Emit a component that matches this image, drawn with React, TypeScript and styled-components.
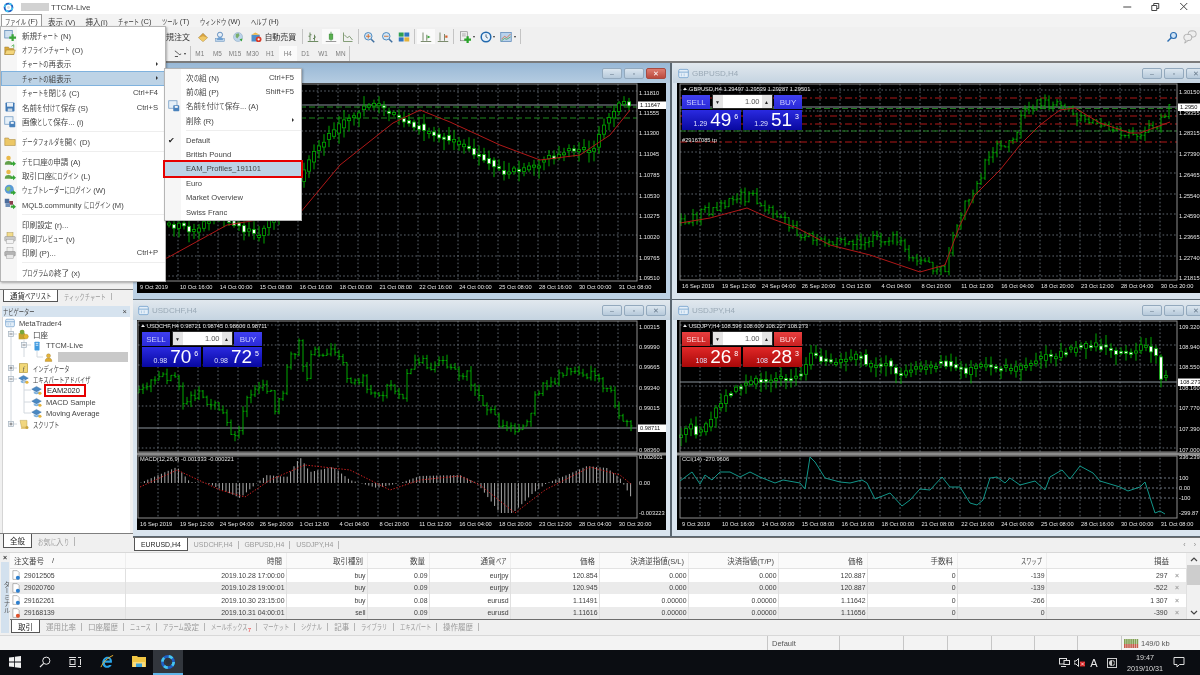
import React from "react";
import styled, { createGlobalStyle } from "styled-components";

const UI_FONT = `"Liberation Sans", "Noto Sans CJK JP", sans-serif`;

const GlobalStyle = createGlobalStyle`
  html, body {
    margin: 0;
    padding: 0;
    background: #f0f0f0;
    overflow: hidden;
  }
  body {
    font-family: ${UI_FONT};
    font-size: 7.5px;
    color: #3a3a3a;
  }
`;

type Pt = [number, number];

// the original UI font squeezes kana sideways, kanji stay full width
const KANA_SCALE = 0.7;

const KanaRun = styled.span<{ $count: number }>`
  display: inline-block;
  width: ${(p) => p.$count * KANA_SCALE}em;
  white-space: nowrap;
`;

const KanaInner = styled.span`
  display: inline-block;
  transform: scaleX(${KANA_SCALE});
  transform-origin: 0 50%;
`;

const Jp: React.FC<{ text: string }> = ({ text }) => (
  <>
    {text.split(/([\u3040-\u30ff]+)/).map((part, i) =>
      i % 2 ? (
        <KanaRun key={i} $count={part.length}>
          <KanaInner>{part}</KanaInner>
        </KanaRun>
      ) : (
        part
      )
    )}
  </>
);

/* ---------- small drawings ---------- */

const glyphs: Record<string, React.ReactNode> = {
  newchart: (
    <>
      <rect x="1" y="2" width="10" height="10" fill="#cfe0f0" stroke="#5b87b5" />
      <path d="M10 7h3v3h3v3h-3v3h-3v-3H7v-3h3z" fill="#3aa53a" />
    </>
  ),
  folderopen: (
    <>
      <path d="M1 4h5l1 2h6v8H1z" fill="#d9a93a" stroke="#96742a" strokeWidth=".6" />
      <path d="M3 8h12l-2 6H1z" fill="#f4d67c" stroke="#96742a" strokeWidth=".6" />
      <path d="M10 3l3-2v4" stroke="#3aa53a" fill="none" />
    </>
  ),
  save: (
    <>
      <rect x="2" y="2" width="12" height="12" rx="1" fill="#3f78b5" />
      <rect x="4" y="2.5" width="8" height="5" fill="#e8f0f8" />
      <rect x="5" y="10" width="6" height="4" fill="#c6d6e6" />
    </>
  ),
  saveimage: (
    <>
      <rect x="1" y="1" width="11" height="10" fill="#e6f0f8" stroke="#6d98c2" />
      <rect x="7" y="7" width="8" height="8" rx="1" fill="#4a82bc" />
      <rect x="9" y="8" width="4" height="2.5" fill="#eef4fa" />
    </>
  ),
  folder: <path d="M1 4h5l1 2h8v8H1z" fill="#ecc766" stroke="#a5843a" strokeWidth=".7" />,
  userarrow: (
    <>
      <circle cx="6" cy="4" r="3" fill="#e9b949" />
      <path d="M1 13c0-4 2-5 5-5s5 1 5 5z" fill="#62a04a" />
      <path d="M9 10h3V8l4 3.5-4 3.5v-2H9z" fill="#35a535" />
    </>
  ),
  globearrow: (
    <>
      <circle cx="7" cy="7" r="6" fill="#5a9bd6" />
      <path d="M3 5l4-2 2 3-3 4-3-2z" fill="#8fc26a" />
      <path d="M9 10h3V8l4 3.5-4 3.5v-2H9z" fill="#35a535" />
    </>
  ),
  mqlarrow: (
    <>
      <rect x="1" y="1" width="6" height="6" fill="#4c6d9c" />
      <rect x="7" y="4" width="5" height="5" fill="#8b3f4c" />
      <rect x="2" y="7" width="6" height="5" fill="#6f8fb8" />
      <path d="M9 10h3V8l4 3.5-4 3.5v-2H9z" fill="#35a535" />
    </>
  ),
  preview: (
    <>
      <rect x="4" y="1" width="8" height="6" fill="#f3dc8c" stroke="#a58d3c" strokeWidth=".6" />
      <rect x="1" y="6" width="14" height="6" rx="1" fill="#c9c9c9" stroke="#888" strokeWidth=".6" />
      <rect x="3" y="10" width="10" height="5" fill="#f2f2f2" stroke="#999" strokeWidth=".6" />
    </>
  ),
  print: (
    <>
      <rect x="4" y="1" width="8" height="6" fill="#f0f0f0" stroke="#999" strokeWidth=".6" />
      <rect x="1" y="6" width="14" height="6" rx="1" fill="#b4b4b4" stroke="#808080" strokeWidth=".6" />
      <rect x="3" y="10" width="10" height="5" fill="#e8e8e8" stroke="#999" strokeWidth=".6" />
    </>
  ),
  gold: (
    <>
      <path d="M2 9l6-6 6 6-6 5z" fill="#d9a441" stroke="#8a6a24" strokeWidth=".6" />
      <path d="M2 9l6 5 6-5-6-2z" fill="#f0c865" />
    </>
  ),
  person: (
    <>
      <rect x="2" y="10" width="12" height="4" fill="#bcd3ea" stroke="#5b87b5" strokeWidth=".6" />
      <circle cx="8" cy="5" r="3.4" fill="#e5eef7" stroke="#3d74b0" />
      <path d="M4 12c0-3 2-4 4-4s4 1 4 4z" fill="#6ea0d2" />
    </>
  ),
  globe: (
    <>
      <circle cx="8" cy="8" r="6" fill="#bcd4ea" stroke="#7d9cbc" strokeWidth=".6" />
      <path d="M5 4l4-1 1 3-3 4-2-2z" fill="#79ad6b" />
      <path d="M10 11l4-1-1 4z" fill="#3aa53a" />
    </>
  ),
  auto: (
    <>
      <rect x="2" y="5" width="11" height="9" fill="#4f8fca" />
      <path d="M2 5l5-3 6 3z" fill="#f0b846" />
      <circle cx="11.5" cy="11" r="3.8" fill="#d83c2a" />
      <circle cx="11.5" cy="11" r="1.5" fill="#fff" />
    </>
  ),
  barchart: (
    <path d="M4 2v11M2 7h2M4 5h2M10 5v8M8 10h2M10 8h2M1 14h14" stroke="#5f7f52" strokeWidth="1.2" fill="none" />
  ),
  candle: (
    <>
      <path d="M1 14h14" stroke="#7a7a7a" />
      <path d="M8 1v12" stroke="#3b8f3b" />
      <rect x="5.5" y="4" width="5" height="7" fill="#59b04f" stroke="#2f7f2f" strokeWidth=".6" />
    </>
  ),
  linechart: <path d="M2 2v12h12M3 5l4 4 3-2 4 5" stroke="#6c8a5c" strokeWidth="1.1" fill="none" />,
  zoomin: (
    <>
      <circle cx="7" cy="7" r="5" fill="#d3e7f7" stroke="#3f7fb8" strokeWidth="1.2" />
      <path d="M7 4v6M4 7h6" stroke="#d26b2a" strokeWidth="1.2" />
      <path d="M11 11l4 4" stroke="#3f6f9f" strokeWidth="2" />
    </>
  ),
  zoomout: (
    <>
      <circle cx="7" cy="7" r="5" fill="#d3e7f7" stroke="#3f7fb8" strokeWidth="1.2" />
      <path d="M4 7h6" stroke="#d26b2a" strokeWidth="1.2" />
      <path d="M11 11l4 4" stroke="#3f6f9f" strokeWidth="2" />
    </>
  ),
  tile: (
    <>
      <rect x="1" y="2" width="6.5" height="5.5" fill="#2f9e52" />
      <rect x="8.5" y="2" width="6.5" height="5.5" fill="#2f75c0" />
      <rect x="1" y="8.5" width="6.5" height="5.5" fill="#2f75c0" />
      <rect x="8.5" y="8.5" width="6.5" height="5.5" fill="#e3b23c" />
    </>
  ),
  scroll: (
    <>
      <path d="M4 2v11M1 14h14M9 5v8" stroke="#6d7f5f" strokeWidth="1.2" fill="none" />
      <path d="M10 6l4 2-4 2z" fill="#3aa53a" />
    </>
  ),
  shift: (
    <>
      <path d="M4 2v11M1 14h14M10 4v9" stroke="#6d7f5f" strokeWidth="1.2" fill="none" />
      <rect x="11" y="6" width="3" height="3" fill="#d8602c" />
    </>
  ),
  docplus: (
    <>
      <rect x="2" y="1" width="9" height="12" fill="#eee" stroke="#777" strokeWidth=".8" />
      <path d="M4 4h5M4 6.5h5" stroke="#999" />
      <path d="M10 7h3v3h3v3h-3v3h-3v-3H7v-3h3z" fill="#28a428" />
    </>
  ),
  clock: (
    <>
      <circle cx="8" cy="8" r="6.4" fill="#e8f2fb" stroke="#2269ad" strokeWidth="2" />
      <path d="M8 4.5V8l2.5 1.5" stroke="#2c3e50" fill="none" />
    </>
  ),
  chartbox: (
    <>
      <rect x="1" y="2" width="14" height="12" fill="#b9d2ec" stroke="#5a86b8" />
      <path d="M2 11l4-4 3 2 5-5" stroke="#d9602c" fill="none" />
      <path d="M2 13l4-3 3 1 5-3" stroke="#4aa04a" fill="none" />
    </>
  ),
  magnifier: (
    <>
      <circle cx="10" cy="6" r="4" fill="#cfe3f6" stroke="#2a6cb0" strokeWidth="1.6" />
      <path d="M7 9l-5 5" stroke="#2a6cb0" strokeWidth="2" />
    </>
  ),
  chat: (
    <>
      <rect x="6" y="1" width="9" height="7" rx="3" fill="#eee" stroke="#aaa" />
      <rect x="1" y="5" width="9" height="7" rx="3" fill="#eee" stroke="#aaa" />
      <path d="M3 12l-1 3 4-3" fill="#eee" stroke="#aaa" />
    </>
  ),
  shapes: (
    <path d="M3 3l3 2M6 5l4 4M10 9l3-1M3 12h5" stroke="#555" strokeWidth="1.6" fill="none" />
  ),
  mtwindow: (
    <>
      <rect x="1" y="2" width="14" height="12" rx="2" fill="#e3eef8" stroke="#74a3cf" strokeWidth="1.2" />
      <path d="M1 6h14" stroke="#74a3cf" strokeWidth="1.2" />
      <path d="M5 8v4M9 8v4" stroke="#9dbfdc" />
    </>
  ),
  account: (
    <>
      <rect x="1" y="6" width="9" height="9" fill="#c4a22e" />
      <circle cx="6" cy="4.5" r="3.5" fill="#7aa63a" />
      <circle cx="11.5" cy="11" r="3.5" fill="#e6b72f" stroke="#a67f1f" strokeWidth=".6" />
    </>
  ),
  server: (
    <>
      <rect x="4" y="1" width="8" height="14" rx="1" fill="#3f9adf" />
      <rect x="6" y="3" width="4" height="1.5" fill="#d7ecfb" />
      <rect x="6" y="6" width="4" height="1.5" fill="#d7ecfb" />
    </>
  ),
  usergold: (
    <>
      <circle cx="8" cy="5" r="3.6" fill="#e5b53c" stroke="#96742a" strokeWidth=".6" />
      <path d="M2 15c0-5 3-6 6-6s6 1 6 6z" fill="#e0ad32" stroke="#96742a" strokeWidth=".6" />
    </>
  ),
  indicator: (
    <>
      <rect x="2" y="1" width="12" height="13" fill="#f2d877" stroke="#b59a3e" />
      <text x="8" y="11" textAnchor="middle" fontSize="9" fontStyle="italic" fill="#444" fontFamily="Liberation Serif, serif">f</text>
    </>
  ),
  expert: (
    <>
      <path d="M1 6l7-4 7 4-7 4z" fill="#4a88c2" stroke="#2d5f90" strokeWidth=".5" />
      <path d="M4 9v3c3 2 5 2 8 0V9l-4 2z" fill="#7fb1dc" />
      <circle cx="13" cy="12" r="2.3" fill="#e4b23c" />
    </>
  ),
  script: (
    <>
      <path d="M3 2h10v10H5z" fill="#f1d67f" stroke="#b59a3e" strokeWidth=".7" />
      <path d="M5 12h7v2H4z" fill="#dcb95a" />
      <circle cx="13" cy="12.5" r="2.2" fill="#c9a43c" />
    </>
  ),
  buyticket: (
    <>
      <path d="M3 1h7l3 3v11H3z" fill="#fff" stroke="#777" strokeWidth=".8" />
      <circle cx="11" cy="12.5" r="3.2" fill="#2b7fd0" />
    </>
  ),
  sellticket: (
    <>
      <path d="M3 1h7l3 3v11H3z" fill="#fff" stroke="#777" strokeWidth=".8" />
      <circle cx="11" cy="12.5" r="3.2" fill="#e0502a" />
    </>
  ),
};

const Glyph: React.FC<{ name: string; size?: number }> = ({ name, size = 12 }) => (
  <svg width={size} height={size} viewBox="0 0 16 16" style={{ flex: "none", display: "block" }}>
    {glyphs[name]}
  </svg>
);

const Ring: React.FC<{ size: number }> = ({ size }) => (
  <svg width={size} height={size} viewBox="0 0 24 24" style={{ flex: "none", display: "block" }}>
    <circle cx="12" cy="12" r="8.5" fill="none" stroke="#1e5fc4" strokeWidth="4" />
    <circle cx="12" cy="12" r="8.5" fill="none" stroke="#46c6ee" strokeWidth="4" strokeDasharray="6 7.4" />
    <circle cx="12" cy="12" r="3.2" fill="#0d1a30" opacity=".15" />
  </svg>
);

/* ---------- chart data ---------- */

const eurPath: Pt[] = [[137, 240], [170, 225], [185, 226], [200, 232], [220, 215], [263, 236], [300, 190], [320, 150], [345, 125], [375, 105], [385, 106], [400, 115], [440, 135], [470, 146], [510, 172], [540, 166], [570, 150], [600, 150], [606, 126], [627, 100], [632, 104]];
const eurMa: Pt[] = [[137, 262], [167, 258], [227, 225], [300, 213], [340, 165], [393, 123], [420, 110], [450, 122], [500, 145], [540, 160], [580, 155], [610, 135], [630, 110]];
const gbpPath: Pt[] = [[680, 222], [700, 215], [720, 205], [735, 195], [760, 200], [775, 215], [800, 232], [830, 245], [870, 240], [900, 240], [915, 262], [945, 270], [955, 230], [965, 205], [985, 165], [1000, 145], [1015, 135], [1025, 110], [1045, 100], [1065, 110], [1090, 125], [1110, 125], [1130, 135], [1150, 130], [1171, 108]];
const gbpMa: Pt[] = [[680, 223], [710, 218], [747, 208], [767, 217], [797, 228], [830, 245], [870, 255], [920, 272], [945, 265], [960, 225], [975, 195], [1000, 170], [1020, 145], [1040, 125], [1060, 110], [1075, 108], [1100, 123], [1130, 133], [1140, 133], [1170, 122]];
const chfPath: Pt[] = [[138, 393], [150, 383], [163, 375], [178, 375], [182, 400], [197, 393], [210, 407], [223, 410], [230, 433], [240, 430], [245, 403], [257, 390], [270, 390], [275, 407], [283, 393], [287, 363], [300, 343], [305, 390], [313, 350], [322, 363], [330, 343], [340, 357], [347, 377], [363, 380], [377, 400], [390, 383], [403, 393], [410, 367], [423, 360], [430, 367], [445, 365], [470, 378], [482, 402], [500, 425], [515, 432], [528, 415], [542, 385], [570, 372], [590, 376], [610, 388], [622, 420], [634, 430]];
const jpyPath: Pt[] = [[680, 440], [695, 423], [700, 433], [710, 427], [720, 410], [730, 397], [745, 387], [760, 380], [780, 380], [795, 378], [808, 372], [815, 352], [827, 362], [845, 359], [865, 355], [870, 365], [890, 363], [905, 375], [915, 370], [930, 368], [945, 362], [960, 368], [970, 372], [990, 365], [1020, 370], [1040, 360], [1060, 355], [1080, 348], [1100, 345], [1120, 352], [1140, 350], [1150, 345], [1160, 352], [1166, 378]];
const macdHist: Pt[] = [[140, 483], [177, 467], [190, 482], [207, 483], [240, 498], [257, 483], [267, 475], [287, 477], [300, 457], [310, 472], [333, 467], [350, 480], [377, 488], [400, 483], [420, 476], [460, 475], [477, 483], [500, 513], [513, 513], [533, 493], [547, 483], [567, 475], [587, 466], [607, 468], [620, 478], [631, 497]];
const macdSignal: Pt[] = [[140, 487], [177, 470], [220, 490], [245, 497], [270, 480], [305, 465], [350, 470], [390, 490], [420, 480], [460, 476], [480, 485], [515, 513], [545, 490], [590, 467], [620, 475], [632, 485]];
const cciLine: Pt[] = [[680, 481], [692, 472], [700, 484], [705, 475], [712, 480], [720, 472], [730, 472], [740, 477], [750, 472], [760, 477], [775, 483], [783, 480], [800, 483], [805, 489], [810, 457], [815, 462], [825, 478], [840, 482], [850, 483], [862, 480], [867, 483], [875, 499], [890, 493], [902, 506], [910, 500], [920, 489], [930, 490], [942, 477], [950, 487], [960, 487], [970, 503], [977, 505], [983, 500], [990, 478], [997, 477], [1005, 483], [1010, 478], [1020, 485], [1035, 481], [1045, 490], [1050, 477], [1062, 470], [1070, 479], [1080, 466], [1093, 473], [1100, 481], [1120, 487], [1128, 491], [1140, 487], [1145, 482], [1155, 513], [1160, 511], [1165, 514]];

const octDates = ["9 Oct 2019", "10 Oct 16:00", "14 Oct 00:00", "15 Oct 08:00", "16 Oct 16:00", "18 Oct 00:00", "21 Oct 08:00", "22 Oct 16:00", "24 Oct 00:00", "25 Oct 08:00", "28 Oct 16:00", "30 Oct 00:00", "31 Oct 08:00"];
const sepDates = ["16 Sep 2019", "19 Sep 12:00", "24 Sep 04:00", "26 Sep 20:00", "1 Oct 12:00", "4 Oct 04:00", "8 Oct 20:00", "11 Oct 12:00", "16 Oct 04:00", "18 Oct 20:00", "23 Oct 12:00", "28 Oct 04:00", "30 Oct 20:00"];

const interp = (pts: Pt[], x: number) => {
  if (x <= pts[0][0]) return pts[0][1];
  for (let i = 1; i < pts.length; i++) {
    if (x <= pts[i][0]) {
      const [ax, ay] = pts[i - 1];
      const [bx, by] = pts[i];
      return ay + ((by - ay) * (x - ax)) / (bx - ax);
    }
  }
  return pts[pts.length - 1][1];
};

const randomFrom = (seed: number) => () => {
  seed = (seed * 1664525 + 1013904223) % 4294967296;
  return seed / 4294967296;
};

const toLine = (pts: Pt[]) => pts.map((p) => p.join(",")).join(" ");

type AxisMark = [number, string];

type ChartSpec = {
  box: { x: number; y: number; w: number; h: number };
  plot: { x0: number; y0: number; x1: number; y1: number };
  style: "bars" | "candles";
  path: Pt[];
  ma?: Pt[];
  seed: number;
  info?: string;
  axis: AxisMark[];
  current: { y: number; label: string };
  hLines?: { y: number; color: string; dash: string }[];
  dates: string[];
  sub?: "macd" | "cci";
  note?: string;
};

const Price = ({ x, y, children }: { x: number; y: number; children: string }) => (
  <text x={x} y={y} fontSize="5.7" fill="#e6e6e6" fontFamily="Liberation Sans, sans-serif">
    {children}
  </text>
);

const BarSeries: React.FC<{ spec: ChartSpec }> = ({ spec }) => {
  const rnd = randomFrom(spec.seed);
  const { x0, x1, y0, y1 } = spec.plot;
  const end = spec.path[spec.path.length - 1][0];
  let d = "";
  let prev = interp(spec.path, x0);
  for (let x = x0 + 1; x < Math.min(x1, end); x += 4) {
    const c = interp(spec.path, x) + (rnd() - 0.5) * 11;
    const hi = Math.max(y0 + 1, Math.min(c, prev) - rnd() * 6);
    const lo = Math.min(y1 - 1, Math.max(c, prev) + rnd() * 6);
    d += `M${x} ${hi}V${lo}M${x - 1.5} ${prev}H${x}M${x} ${c}H${x + 1.5}`;
    prev = c;
  }
  return <path d={d} stroke="#00a800" strokeWidth="1" fill="none" />;
};

const CandleSeries: React.FC<{ spec: ChartSpec }> = ({ spec }) => {
  const rnd = randomFrom(spec.seed);
  const { x0, x1 } = spec.plot;
  const end = spec.path[spec.path.length - 1][0];
  const items: React.ReactNode[] = [];
  for (let x = x0 + 1; x < Math.min(x1, end + 1); x += 5) {
    const c = interp(spec.path, x);
    const next = interp(spec.path, x + 5);
    const o = c + (rnd() - 0.5) * 6;
    const k = next + (rnd() - 0.5) * 6;
    const top = Math.min(o, k);
    const h = Math.max(Math.abs(o - k), 2);
    const hi = top - 2 - rnd() * 8;
    const lo = top + h + 2 + rnd() * 9;
    items.push(
      <g key={x}>
        <path d={`M${x} ${hi}V${lo}`} stroke="#00a800" />
        <rect x={x - 1.6} y={top} width="3.2" height={h} fill={k > o ? "#fff" : "#000"} stroke="#00a800" strokeWidth=".8" />
      </g>
    );
  }
  return <>{items}</>;
};

const MacdPane: React.FC<{ x0: number; x1: number }> = ({ x0, x1 }) => {
  let d = "";
  for (let x = x0 + 3; x < 632; x += 3.4) d += `M${x} 483V${interp(macdHist, x)}`;
  return (
    <>
      <path d={d} stroke="#a9a9a9" strokeWidth="1" fill="none" />
      <polyline points={toLine(macdSignal)} fill="none" stroke="#d02020" strokeWidth="1" strokeDasharray="1.4 1.6" />
      <Price x={140} y={461}>MACD(12,26,9) -0.001333 -0.000221</Price>
      <Price x={x1 + 2} y={459}>0.002601</Price>
      <Price x={x1 + 2} y={485}>0.00</Price>
      <Price x={x1 + 2} y={515}>-0.003223</Price>
    </>
  );
};

const CciPane: React.FC<{ x1: number }> = ({ x1 }) => (
  <>
    {[478, 488, 498].map((y) => (
      <path key={y} d={`M680 ${y}H${x1}`} stroke="#8a96a2" strokeDasharray="2 2" strokeWidth=".8" />
    ))}
    <polyline points={toLine(cciLine)} fill="none" stroke="#12968a" strokeWidth="1" />
    <Price x={682} y={461}>CCI(14) -270.9606</Price>
    <Price x={x1 + 2} y={459}>336.2395</Price>
    <Price x={x1 + 2} y={480}>100</Price>
    <Price x={x1 + 2} y={490}>0.00</Price>
    <Price x={x1 + 2} y={500}>-100</Price>
    <Price x={x1 + 2} y={515}>-299.87</Price>
  </>
);

const Chart: React.FC<{ spec: ChartSpec }> = ({ spec }) => {
  const { box, plot } = spec;
  const hasSub = !!spec.sub;
  const subTop = 456;
  const subBottom = 518;
  const bottom = hasSub ? subBottom : plot.y1;
  const vx: number[] = [];
  for (let x = plot.x0 + 20; x < plot.x1; x += 20) vx.push(x);
  const gridLines = spec.axis.map((a) => a[0] - 2).filter((y) => y > plot.y0 && y < plot.y1 - 1);
  return (
    <svg width={box.w} height={box.h} viewBox={`${box.x} ${box.y} ${box.w} ${box.h}`} style={{ display: "block" }}>
      <rect x={box.x} y={box.y} width={box.w} height={box.h} fill="#000" />
      {vx.map((x) => (
        <path key={x} d={`M${x} ${plot.y0}V${bottom}`} stroke="#76808c" strokeWidth=".8" strokeDasharray="1.6 2.2" />
      ))}
      {gridLines.map((y) => (
        <path key={y} d={`M${plot.x0} ${y}H${plot.x1}`} stroke="#76808c" strokeWidth=".8" strokeDasharray="1.6 2.2" />
      ))}
      {spec.hLines?.map((l) => (
        <path key={l.y} d={`M${plot.x0} ${l.y}H${plot.x1}`} stroke={l.color} strokeWidth="1" strokeDasharray={l.dash} />
      ))}
      <path d={`M${plot.x0} ${spec.current.y}H${plot.x1}`} stroke="#8b949c" strokeWidth="1" />
      {spec.style === "bars" ? <BarSeries spec={spec} /> : <CandleSeries spec={spec} />}
      {spec.ma && <polyline points={toLine(spec.ma)} fill="none" stroke="#b01818" strokeWidth="1" />}
      <rect x={plot.x0} y={plot.y0} width={plot.x1 - plot.x0} height={plot.y1 - plot.y0} fill="none" stroke="#8d8d8d" />
      {spec.info && (
        <>
          <path d={`M${plot.x0 + 3} ${plot.y0 + 6}l2 -2.4 2 2.4z`} fill="#eee" />
          <Price x={plot.x0 + 9} y={plot.y0 + 7}>{spec.info}</Price>
        </>
      )}
      {spec.note && <Price x={plot.x0 + 2} y={142}>{spec.note}</Price>}
      {spec.axis.map(([y, label]) => (
        <Price key={label} x={plot.x1 + 2} y={y + 2}>{label}</Price>
      ))}
      <rect x={plot.x1 + 1} y={spec.current.y - 3.5} width={box.x + box.w - plot.x1 - 1} height="7.5" fill="#fff" />
      <text x={plot.x1 + 3} y={spec.current.y + 2.4} fontSize="5.7" fill="#111" fontFamily="Liberation Sans, sans-serif">
        {spec.current.label}
      </text>
      {hasSub && (
        <>
          <rect x={box.x} y={plot.y1 + 0.5} width={box.w} height="3" fill="#8b8b8b" />
          <rect x={plot.x0} y={subTop} width={plot.x1 - plot.x0} height={subBottom - subTop} fill="none" stroke="#8d8d8d" />
          {spec.sub === "macd" ? <MacdPane x0={plot.x0} x1={plot.x1} /> : <CciPane x1={plot.x1} />}
        </>
      )}
      {spec.dates.map((label, i) => (
        <Price key={label} x={plot.x0 + 2 + i * 39.9} y={bottom + 7.5}>{label}</Price>
      ))}
    </svg>
  );
};

const redDash = "7 3 2 3";
const eurSpec: ChartSpec = {
  box: { x: 137, y: 83, w: 529, h: 210 },
  plot: { x0: 138, y0: 84, x1: 637, y1: 281 },
  style: "candles",
  path: eurPath,
  ma: eurMa,
  seed: 11,
  axis: [[93, "1.11810"], [113, "1.11555"], [133, "1.11300"], [154, "1.11045"], [175, "1.10785"], [196, "1.10530"], [216, "1.10275"], [237, "1.10020"], [258, "1.09765"], [278, "1.09510"]],
  current: { y: 105, label: "1.11647" },
  hLines: [
    { y: 107, color: "#1f8a1f", dash: "6 3" },
    { y: 118, color: "#1f8a1f", dash: "6 3" },
  ],
  dates: octDates,
};
const gbpSpec: ChartSpec = {
  box: { x: 677, y: 83, w: 523, h: 210 },
  plot: { x0: 680, y0: 84, x1: 1177, y1: 280 },
  style: "bars",
  path: gbpPath,
  ma: gbpMa,
  seed: 29,
  info: "GBPUSD,H4  1.29497 1.29539 1.29287 1.29501",
  axis: [[92, "1.30150"], [113, "1.29355"], [133, "1.28315"], [154, "1.27390"], [175, "1.26465"], [196, "1.25540"], [216, "1.24590"], [237, "1.23665"], [258, "1.22740"], [278, "1.21815"]],
  current: { y: 107, label: "1.2950" },
  hLines: [
    { y: 98, color: "#b01818", dash: redDash },
    { y: 116, color: "#b01818", dash: redDash },
    { y: 124, color: "#b01818", dash: redDash },
    { y: 142, color: "#b01818", dash: redDash },
    { y: 108.5, color: "#1f7a1f", dash: "6 3" },
    { y: 131, color: "#1f7a1f", dash: "6 3" },
  ],
  dates: sepDates,
  note: "#29167085 tp",
};
const chfSpec: ChartSpec = {
  box: { x: 137, y: 320, w: 529, h: 210 },
  plot: { x0: 138, y0: 321, x1: 637, y1: 452 },
  style: "bars",
  path: chfPath,
  seed: 47,
  info: "USDCHF,H4  0.98721 0.98745 0.98606 0.98711",
  axis: [[327, "1.00315"], [347, "0.99990"], [367, "0.99665"], [388, "0.99340"], [408, "0.99015"], [450, "0.98360"]],
  current: { y: 428, label: "0.98711" },
  dates: sepDates,
  sub: "macd",
};
const jpySpec: ChartSpec = {
  box: { x: 677, y: 320, w: 523, h: 210 },
  plot: { x0: 680, y0: 321, x1: 1177, y1: 452 },
  style: "candles",
  path: jpyPath,
  seed: 83,
  info: "USDJPY,H4  108.596 108.609 108.227 108.273",
  axis: [[327, "109.320"], [347, "108.940"], [367, "108.550"], [388, "108.160"], [408, "107.770"], [429, "107.390"], [450, "107.000"]],
  current: { y: 382, label: "108.273" },
  dates: octDates,
  sub: "cci",
};

/* ---------- window frame ---------- */

const Page = styled.div`
  position: relative;
  width: 1200px;
  height: 675px;
  overflow: hidden;
  display: flex;
  flex-direction: column;
  background: #f0f0f0;
  filter: blur(0.4px);
`;

const TitleBar = styled.div`
  height: 14px;
  background: #fff;
  display: flex;
  align-items: center;
  padding-left: 3px;
  font-size: 8px;
  color: #444;
  flex: none;
`;

const Redacted = styled.div`
  width: 28px;
  height: 8px;
  background: #d2d2d2;
  margin: 0 2px 0 7px;
`;

const WindowControls = styled.div`
  margin-left: auto;
  display: flex;
  align-items: center;
  padding-right: 2px;
`;

const ControlIcon = styled.svg`
  width: 28.5px;
  height: 12px;
  display: block;
`;

const MenuBar = styled.div`
  height: 13px;
  display: flex;
  align-items: stretch;
  padding-left: 1px;
  background: #f3f3f3;
  flex: none;
`;

const MenuBarItem = styled.div<{ $open?: boolean }>`
  display: flex;
  align-items: center;
  padding: 0 3px;
  margin-right: 2.4px;
  font-size: 7.5px;
  white-space: pre;
  border: 1px solid ${(p) => (p.$open ? "#9a9a9a" : "transparent")};
  border-bottom: none;
  background: ${(p) => (p.$open ? "#fdfdfd" : "transparent")};
`;

const ToolRow = styled.div<{ $pad: number; $height: number }>`
  height: ${(p) => p.$height}px;
  padding-left: ${(p) => p.$pad}px;
  display: flex;
  align-items: center;
  flex: none;
  background: #f0f0f0;
  &:first-of-type {
    border-top: 1px solid #c9c9c9;
  }
`;

const ToolText = styled.span<{ $after?: number }>`
  font-size: 8px;
  color: #333;
  white-space: nowrap;
  margin-right: ${(p) => p.$after ?? 0}px;
`;

const ToolButton = styled.div<{ $active?: boolean }>`
  width: 17.6px;
  height: 15px;
  display: flex;
  align-items: center;
  justify-content: center;
  flex: none;
  box-sizing: border-box;
  font-size: 6.4px;
  color: #7c7c7c;
  background: ${(p) => (p.$active ? "#fafafa" : "transparent")};
`;

const ToolArrow = styled.span`
  width: 0;
  height: 0;
  margin: 0 2px 0 -1px;
  border-left: 1.8px solid transparent;
  border-right: 1.8px solid transparent;
  border-top: 2.2px solid #333;
  flex: none;
`;

const ToolSep = styled.div<{ $left?: number; $right?: number }>`
  width: 1px;
  height: 15px;
  background: #c4c4c4;
  flex: none;
  margin: 0 ${(p) => p.$right ?? 3}px 0 ${(p) => p.$left ?? 3}px;
`;

const ToolEnd = styled.div`
  display: flex;
  align-items: center;
  margin-left: auto;
  padding-right: 3px;
  gap: 5px;
`;

const Workspace = styled.div`
  height: 488px;
  display: flex;
  flex: none;
  border-top: 2px solid #7b7b7b;
  box-sizing: content-box;
`;

const LeftDock = styled.div`
  width: 133px;
  flex: none;
  display: flex;
  flex-direction: column;
  background: #f0f0f0;
  box-sizing: border-box;
`;

const WatchArea = styled.div`
  flex: none;
  height: 239px;
  display: flex;
  flex-direction: column;
  justify-content: flex-end;
`;

const TabStrip = styled.div<{ $left?: number; $height?: number }>`
  height: ${(p) => p.$height ?? 13}px;
  display: flex;
  align-items: stretch;
  padding-left: ${(p) => p.$left ?? 3}px;
  border-top: 1px solid #7f7f7f;
  background: #f0f0f0;
  flex: none;
  box-sizing: border-box;
`;

const Tab = styled.div<{ $active?: boolean; $size?: number }>`
  display: flex;
  align-items: center;
  padding: 0 6px;
  white-space: nowrap;
  font-size: ${(p) => p.$size ?? 7.5}px;
  color: ${(p) => (p.$active ? "#222" : "#9a9a9a")};
  background: ${(p) => (p.$active ? "#fff" : "transparent")};
  position: relative;
  ${(p) =>
    p.$active
      ? `border: 1px solid #555; border-top: none;`
      : `&::after { content: ""; position: absolute; right: 0; top: 3px; bottom: 2px; width: 1px; background: #b5b5b5; }`}
`;

const Spacer = styled.div<{ $h: number }>`
  height: ${(p) => p.$h}px;
  flex: none;
`;

const NavHeader = styled.div`
  height: 11px;
  margin: 0 3px 0 2px;
  padding: 0 3px 0 1px;
  display: flex;
  align-items: center;
  justify-content: space-between;
  background: #d6e3ef;
  font-size: 7.5px;
  color: #444;
  flex: none;
`;

const TreePanel = styled.div`
  position: relative;
  flex: 1;
  background: #fff;
  margin: 0 3px 0 2px;
  border-left: 1px solid #d5d5d5;
  padding-top: 0.5px;
`;

const TreeGuides = styled.svg`
  position: absolute;
  left: -3px;
  top: 0;
  width: 60px;
  height: 120px;
`;

const TreeRow = styled.div<{ $indent: number }>`
  position: relative;
  height: 11.3px;
  display: flex;
  align-items: center;
  gap: 3px;
  padding-left: ${(p) => p.$indent}px;
  font-size: 7.5px;
  color: #444;
  white-space: nowrap;
`;

const TreeLabel = styled.span<{ $marked?: boolean }>`
  padding: 0 1px;
  ${(p) => (p.$marked ? "outline: 2px solid #e60000; outline-offset: 0; color: #222; margin-left: 1px; width: 36px;" : "")}
`;

const RedactedRow = styled.div`
  width: 70px;
  height: 10px;
  background: #c9c9c9;
  margin-left: 2px;
`;

const ChartDock = styled.div`
  flex: 1;
  min-width: 0;
  display: flex;
  flex-direction: column;
  background: #5a6670;
  overflow: hidden;
`;

const WindowGrid = styled.div`
  display: grid;
  grid-template-columns: 537px 538px;
  grid-template-rows: 236px 236px;
  gap: 1px 2px;
  flex: none;
`;

const ChartWindow = styled.div<{ $active?: boolean; $edge?: boolean }>`
  display: flex;
  flex-direction: column;
  padding: 0 4px 6px ${(p) => (p.$edge ? 5 : 4)}px;
  background: ${(p) => (p.$active ? "#bcd1e5" : "#d9e4ee")};
`;

const WindowTitle = styled.div<{ $active?: boolean }>`
  height: 20px;
  flex: none;
  display: flex;
  align-items: center;
  gap: 3px;
  font-size: 8px;
  color: #9aa9b6;
  background: ${(p) =>
    p.$active ? "linear-gradient(#98b8d6, #b5cce1)" : "linear-gradient(#e1e8ee, #c5d4e1)"};
  margin: 0 -4px 0 -4px;
  padding-left: 5px;
  padding-right: 4px;
`;

const TitleButtons = styled.div`
  margin-left: auto;
  display: flex;
  gap: 2px;
`;

const TitleButton = styled.div<{ $close?: boolean }>`
  width: 20px;
  height: 11px;
  border-radius: 2px;
  box-sizing: border-box;
  border: 1px solid ${(p) => (p.$close ? "#a84a40" : "#93a9bd")};
  background: ${(p) => (p.$close ? "linear-gradient(#dd7c70, #bb4a3e)" : "linear-gradient(#dbe6ef, #b6c9da)")};
  display: flex;
  align-items: center;
  justify-content: center;
  color: ${(p) => (p.$close ? "#fff" : "#66788a")};
  font-size: 7px;
  line-height: 1;
`;

const ChartHolder = styled.div`
  position: relative;
  height: 210px;
  flex: none;
`;

const TradePanel = styled.div<{ $top: number }>`
  position: absolute;
  left: 5px;
  top: ${(p) => p.$top}px;
  width: 120px;
  display: grid;
  grid-template-columns: 28px 1fr 28px;
  grid-template-rows: 14px 20px;
  gap: 1px 1.5px;
  color: #fff;
`;

const TradeButton = styled.div<{ $red?: boolean }>`
  display: flex;
  align-items: center;
  justify-content: center;
  font-size: 8px;
  color: ${(p) => (p.$red ? "#ffd6d6" : "#c8ccff")};
  background: ${(p) => (p.$red ? "linear-gradient(#e84040, #c82020)" : "linear-gradient(#4040f0, #2a2ad8)")};
`;

const Spinner = styled.div`
  display: grid;
  grid-template-columns: 10px 1fr 10px;
  border: 1.5px solid #2a2a2a;
  background: #fff;
  color: #555;
  font-size: 7.5px;
  align-items: center;
  box-sizing: border-box;
  margin-top: -1px;
  height: 15px;
`;

const SpinArrow = styled.span`
  display: flex;
  height: 100%;
  align-items: center;
  justify-content: center;
  background: #e4e4e4;
  color: #222;
  font-size: 5px;
`;

const SpinValue = styled.span`
  text-align: right;
  padding-right: 2px;
`;

const PriceRow = styled.div`
  grid-column: 1 / 4;
  display: grid;
  grid-template-columns: 1fr 1fr;
  gap: 1.5px;
`;

const PriceBox = styled.div<{ $red?: boolean }>`
  display: flex;
  align-items: center;
  justify-content: flex-end;
  padding-right: 2px;
  background: ${(p) => (p.$red ? "linear-gradient(#e02828, #a80808)" : "linear-gradient(#2a2ae0, #0808a0)")};
`;

const PriceSmall = styled.span`
  font-size: 7px;
  color: #dfe3ff;
  align-self: flex-end;
  margin: 0 3px 3px 0;
`;

const PriceBig = styled.span`
  font-size: 19px;
  line-height: 20px;
`;

const PriceSup = styled.sup`
  font-size: 7px;
  line-height: 1;
  align-self: flex-start;
  margin: 2.5px 1px 0 3px;
`;

const ChartTabs = styled.div`
  height: 14px;
  display: flex;
  align-items: stretch;
  flex: none;
  padding-left: 1px;
  border-top: 1px solid #6c6c6c;
  background: #f0f0f0;
  box-sizing: border-box;
  margin-top: 1px;
`;

const Chevrons = styled.div`
  margin-left: auto;
  display: flex;
  gap: 8px;
  align-items: center;
  padding-right: 4px;
  color: #888;
  font-size: 7px;
`;

/* ---------- terminal ---------- */

const Terminal = styled.div`
  flex: none;
  display: flex;
  height: 80px;
  margin-top: 1px;
  border-top: 1px solid #d8d8d8;
`;

const TerminalSide = styled.div`
  width: 10px;
  flex: none;
  display: flex;
  flex-direction: column;
  align-items: center;
  font-size: 7px;
  background: #f0f0f0;
`;

const SideClose = styled.span`
  height: 9px;
  line-height: 9px;
  color: #333;
  font-weight: bold;
`;

const SideTitle = styled.div`
  flex: 1;
  width: 8px;
  background: #d3e1ee;
  display: flex;
  justify-content: center;
  align-items: flex-end;
  writing-mode: vertical-rl;
  font-size: 6.5px;
  color: #555;
  padding-bottom: 1px;
`;

const TerminalMain = styled.div`
  flex: 1;
  min-width: 0;
  display: flex;
  flex-direction: column;
`;

const TableArea = styled.div`
  height: 66px;
  display: flex;
  flex: none;
  border-bottom: 1px solid #6d6d6d;
  box-sizing: content-box;
`;

const TableBody = styled.div`
  flex: 1;
  min-width: 0;
`;

const gridCols = "116px 161px 81px 62px 81px 89px 89px 90px 89px 90px 89px 140px";

const HeaderRow = styled.div`
  display: grid;
  grid-template-columns: ${gridCols};
  height: 16px;
  background: #fafafa;
  border-bottom: 1px solid #e3e3e3;
  box-sizing: border-box;
`;

const HeadCell = styled.div<{ $left?: boolean; $tail?: boolean }>`
  display: flex;
  align-items: center;
  justify-content: ${(p) => (p.$left ? "flex-start" : "flex-end")};
  padding: 0 ${(p) => (p.$tail ? 17 : 4)}px 0 4px;
  gap: 8px;
  font-size: 7.5px;
  border-right: 1px solid #eee;
  color: #444;
  white-space: nowrap;
`;

const DataRow = styled.div<{ $alt?: boolean }>`
  display: grid;
  grid-template-columns: ${gridCols};
  height: 12.5px;
  background: ${(p) => (p.$alt ? "#ebebeb" : "#fff")};
`;

const DataCell = styled.div<{ $first?: boolean }>`
  display: flex;
  align-items: center;
  justify-content: ${(p) => (p.$first ? "flex-start" : "flex-end")};
  gap: 3px;
  padding: ${(p) => (p.$first ? "0 0 0 1px" : "0 1.5px 0 0")};
  font-size: 6.9px;
  color: #404040;
  border-right: 1px solid #e0e0e0;
  white-space: nowrap;
`;

const RowClose = styled.span`
  width: 9px;
  margin: 0 3px 0 2px;
  color: #a0a0a0;
  font-weight: bold;
  text-align: center;
`;

const Scrollbar = styled.div`
  width: 13px;
  flex: none;
  display: flex;
  flex-direction: column;
  align-items: center;
  background: #f1f1f1;
  color: #444;
`;

const ScrollButton = styled.div`
  height: 12px;
  display: flex;
  align-items: center;
  justify-content: center;
  flex: none;
`;

const ScrollThumb = styled.div`
  width: 100%;
  height: 20px;
  background: #cdcdcd;
  flex: none;
`;

const ScrollTrack = styled.div`
  flex: 1;
`;

const TerminalTabs = styled.div`
  height: 13px;
  display: flex;
  align-items: stretch;
  padding-left: 1px;
  flex: none;
  background: #f0f0f0;
`;

const Badge = styled.sub`
  color: #e33;
  font-size: 6px;
  line-height: 1;
  align-self: flex-end;
`;

const StatusBar = styled.div`
  height: 15px;
  margin-top: 2px;
  display: flex;
  flex: none;
  background: #f3f3f3;
  border-top: 1px solid #d8d8d8;
  box-sizing: border-box;
`;

const StatusCell = styled.div<{ $w: number; $plain?: boolean }>`
  width: ${(p) => p.$w}px;
  flex: none;
  display: flex;
  align-items: center;
  gap: 2px;
  padding-left: ${(p) => (p.$plain ? 2 : 4)}px;
  box-sizing: border-box;
  border-right: ${(p) => (p.$plain ? "none" : "1px solid #c6c6c6")};
  font-size: 7.5px;
  color: #555;
`;

const Taskbar = styled.div`
  flex: 1;
  display: flex;
  align-items: stretch;
  background: #0b0d12;
  color: #e8e8e8;
`;

const TaskSlot = styled.div<{ $active?: boolean; $w?: number }>`
  width: ${(p) => p.$w ?? 30}px;
  flex: none;
  display: flex;
  align-items: center;
  justify-content: center;
  box-sizing: border-box;
  background: ${(p) => (p.$active ? "#32363d" : "transparent")};
  border-bottom: 2px solid ${(p) => (p.$active ? "#5fb4e8" : "transparent")};
`;

const Tray = styled.div`
  margin-left: auto;
  padding-right: 6px;
  display: flex;
  align-items: center;
`;

const TrayItem = styled.div<{ $w: number }>`
  width: ${(p) => p.$w}px;
  flex: none;
  display: flex;
  justify-content: center;
  font-size: 11px;
`;

const Clock = styled.div`
  width: 38px;
  margin-left: 4px;
  text-align: center;
  font-size: 7.2px;
  line-height: 11px;
  color: #ddd;
  white-space: nowrap;
`;

/* ---------- menus ---------- */

const MenuPanel = styled.div<{ $left: number; $top: number; $width: number }>`
  position: absolute;
  left: ${(p) => p.$left}px;
  top: ${(p) => p.$top}px;
  width: ${(p) => p.$width}px;
  padding: 1px 0 1px;
  box-sizing: border-box;
  background: linear-gradient(90deg, #f6f6f6 16px, #fff 16px);
  border: 1px solid #b5b5b5;
  box-shadow: 1px 1px 2px rgba(0, 0, 0, 0.3);
`;

const MenuRow = styled.div<{ $hot?: boolean; $marked?: boolean }>`
  height: 14.4px;
  display: flex;
  align-items: center;
  box-sizing: border-box;
  padding-right: 7px;
  font-size: 7.6px;
  color: #444;
  white-space: pre;
  position: relative;
  background: ${(p) => (p.$hot ? "#bdd3e6" : "transparent")};
  ${(p) => (p.$hot && !p.$marked ? "box-shadow: inset 0 0 0 1px #7fb2de;" : "")}
  ${(p) => (p.$marked ? "outline: 2px solid #e60000; z-index: 1;" : "")}
`;

const MenuIcon = styled.div`
  width: 21px;
  flex: none;
  padding-left: 3px;
  box-sizing: border-box;
  color: #222;
  font-size: 8px;
`;

const MenuText = styled.span``;

const MenuKey = styled.span`
  margin-left: auto;
`;

const MenuArrow = styled.span`
  margin-left: auto;
  width: 0;
  height: 0;
  border-top: 2px solid transparent;
  border-bottom: 2px solid transparent;
  border-left: 2.5px solid #333;
`;

const MenuRule = styled.div`
  height: 5.4px;
  display: flex;
  align-items: center;
  padding-left: 21px;
  &::after {
    content: "";
    flex: 1;
    height: 1px;
    background: #eeeeee;
  }
`;

/* ---------- content ---------- */

type MenuEntry = "-" | { label: string; icon?: string; keys?: string; sub?: boolean; hot?: boolean; marked?: boolean; check?: boolean };

const fileMenu: MenuEntry[] = [
  { label: "新規チャート (N)", icon: "newchart" },
  { label: "オフラインチャート (O)", icon: "folderopen" },
  { label: "チャートの再表示", sub: true },
  { label: "チャートの組表示", sub: true, hot: true },
  { label: "チャートを閉じる (C)", keys: "Ctrl+F4" },
  { label: "名前を付けて保存 (S)", icon: "save", keys: "Ctrl+S" },
  { label: "画像として保存... (i)", icon: "saveimage" },
  "-",
  { label: "データフォルダを開く (D)", icon: "folder" },
  "-",
  { label: "デモ口座の申請 (A)", icon: "userarrow" },
  { label: "取引口座にログイン (L)", icon: "userarrow" },
  { label: "ウェブトレーダーにログイン (W)", icon: "globearrow" },
  { label: "MQL5.community にログイン (M)", icon: "mqlarrow" },
  "-",
  { label: "印刷設定 (r)..." },
  { label: "印刷プレビュー (v)", icon: "preview" },
  { label: "印刷 (P)...", icon: "print", keys: "Ctrl+P" },
  "-",
  { label: "プログラムの終了 (x)" },
];

const profileMenu: MenuEntry[] = [
  { label: "次の組 (N)", keys: "Ctrl+F5" },
  { label: "前の組 (P)", keys: "Shift+F5" },
  { label: "名前を付けて保存... (A)", icon: "saveimage" },
  { label: "削除 (R)", sub: true },
  "-",
  { label: "Default", check: true },
  { label: "British Pound" },
  { label: "EAM_Profiles_191101", hot: true, marked: true },
  { label: "Euro" },
  { label: "Market Overview" },
  { label: "Swiss Franc" },
];

const MenuList: React.FC<{ entries: MenuEntry[] }> = ({ entries }) => (
  <>
    {entries.map((entry, i) =>
      entry === "-" ? (
        <MenuRule key={i} />
      ) : (
        <MenuRow key={entry.label} $hot={entry.hot} $marked={entry.marked}>
          <MenuIcon>
            {entry.icon && <Glyph name={entry.icon} />}
            {entry.check && "✔"}
          </MenuIcon>
          <MenuText>
            <Jp text={entry.label} />
          </MenuText>
          {entry.keys && <MenuKey>{entry.keys}</MenuKey>}
          {entry.sub && <MenuArrow />}
        </MenuRow>
      )
    )}
  </>
);

const menuTitles = ["表示 (V)", "挿入(I)", "チャート (C)", "ツール (T)", "ウィンドウ (W)", "ヘルプ (H)"];
const periods = ["M1", "M5", "M15", "M30", "H1", "H4", "D1", "W1", "MN"];
const terminalTabs = ["運用比率", "口座履歴", "ニュース", "アラーム設定"];
const terminalTabsRest = ["マーケット", "シグナル", "記事", "ライブラリ", "エキスパート", "操作履歴"];

const headers = ["時間", "取引種別", "数量", "通貨ペア", "価格", "決済逆指値(S/L)", "決済指値(T/P)", "価格", "手数料", "スワップ"];

const orders = [
  ["29012505", "2019.10.28 17:00:00", "buy", "0.09", "eurjpy", "120.854", "0.000", "0.000", "120.887", "0", "-139", "297"],
  ["29020760", "2019.10.28 19:00:01", "buy", "0.09", "eurjpy", "120.945", "0.000", "0.000", "120.887", "0", "-139", "-522"],
  ["29162261", "2019.10.30 23:15:00", "buy", "0.08", "eurusd", "1.11491", "0.00000", "0.00000", "1.11642", "0", "-266", "1 307"],
  ["29168139", "2019.10.31 04:00:01", "sell", "0.09", "eurusd", "1.11616", "0.00000", "0.00000", "1.11656", "0", "0", "-390"],
];

const Trade: React.FC<{
  top: number;
  red?: boolean;
  prefix: string;
  sell: [string, string];
  buy: [string, string];
}> = ({ top, red, prefix, sell, buy }) => (
  <TradePanel $top={top}>
    <TradeButton $red={red}>SELL</TradeButton>
    <Spinner>
      <SpinArrow>▼</SpinArrow>
      <SpinValue>1.00</SpinValue>
      <SpinArrow>▲</SpinArrow>
    </Spinner>
    <TradeButton $red={red}>BUY</TradeButton>
    <PriceRow>
      <PriceBox $red={red}>
        <PriceSmall>{prefix}</PriceSmall>
        <PriceBig>{sell[0]}</PriceBig>
        <PriceSup>{sell[1]}</PriceSup>
      </PriceBox>
      <PriceBox $red={red}>
        <PriceSmall>{prefix}</PriceSmall>
        <PriceBig>{buy[0]}</PriceBig>
        <PriceSup>{buy[1]}</PriceSup>
      </PriceBox>
    </PriceRow>
  </TradePanel>
);

const WindowFrame: React.FC<{
  title?: string;
  active?: boolean;
  edge?: boolean;
  children: React.ReactNode;
}> = ({ title, active, edge, children }) => (
  <ChartWindow $active={active} $edge={edge}>
    <WindowTitle $active={active}>
      {title && <Glyph name="mtwindow" size={11} />}
      {title}
      <TitleButtons>
        <TitleButton>–</TitleButton>
        <TitleButton>▫</TitleButton>
        <TitleButton $close={active}>✕</TitleButton>
      </TitleButtons>
    </WindowTitle>
    <ChartHolder>{children}</ChartHolder>
  </ChartWindow>
);

const App: React.FC = () => (
  <Page>
    <GlobalStyle />
    <TitleBar>
      <Ring size={11} />
      <Redacted />
      TTCM-Live
      <WindowControls>
        <ControlIcon viewBox="0 0 28 12">
          <path d="M10 6h8" stroke="#444" />
        </ControlIcon>
        <ControlIcon viewBox="0 0 28 12">
          <path d="M10.5 4.5h5v5h-5zM12.5 4.5v-2h5v5h-2" stroke="#444" fill="none" />
        </ControlIcon>
        <ControlIcon viewBox="0 0 28 12">
          <path d="M10 2l7 7M17 2l-7 7" stroke="#444" />
        </ControlIcon>
      </WindowControls>
    </TitleBar>

    <MenuBar>
      <MenuBarItem $open>
        <Jp text="ファイル (F)" />
      </MenuBarItem>
      {menuTitles.map((t) => (
        <MenuBarItem key={t}>
          <Jp text={t} />
        </MenuBarItem>
      ))}
    </MenuBar>

    <ToolRow $pad={158} $height={19}>
      <ToolText $after={4}>新規注文</ToolText>
      {["gold", "person", "globe", "auto"].map((g) => (
        <ToolButton key={g}>
          <Glyph name={g} />
        </ToolButton>
      ))}
      <ToolText>自動売買</ToolText>
      <ToolSep $left={6} $right={1} />
      <ToolButton>
        <Glyph name="barchart" />
      </ToolButton>
      <ToolButton $active>
        <Glyph name="candle" />
      </ToolButton>
      <ToolButton>
        <Glyph name="linechart" />
      </ToolButton>
      <ToolSep $left={1} $right={1} />
      <ToolButton>
        <Glyph name="zoomin" />
      </ToolButton>
      <ToolButton>
        <Glyph name="zoomout" />
      </ToolButton>
      <ToolButton>
        <Glyph name="tile" />
      </ToolButton>
      <ToolSep $left={1} $right={2} />
      <ToolButton $active>
        <Glyph name="scroll" />
      </ToolButton>
      <ToolButton>
        <Glyph name="shift" />
      </ToolButton>
      <ToolSep $left={1} $right={2} />
      <ToolButton>
        <Glyph name="docplus" />
      </ToolButton>
      <ToolArrow />
      <ToolButton>
        <Glyph name="clock" />
      </ToolButton>
      <ToolArrow />
      <ToolButton>
        <Glyph name="chartbox" />
      </ToolButton>
      <ToolArrow />
      <ToolSep $left={2} $right={0} />
      <ToolEnd>
        <Glyph name="magnifier" />
        <Glyph name="chat" size={14} />
      </ToolEnd>
    </ToolRow>

    <ToolRow $pad={173} $height={15}>
      <Glyph name="shapes" size={10} />
      <ToolArrow style={{ marginLeft: 1 }} />
      <ToolSep $left={2} $right={0} />
      {periods.map((p) => (
        <ToolButton key={p} $active={p === "H4"}>
          {p}
        </ToolButton>
      ))}
      <ToolSep $left={0} $right={0} />
    </ToolRow>

    <Workspace>
      <LeftDock>
        <WatchArea>
          <TabStrip>
            <Tab $active>
              <Jp text="通貨ペアリスト" />
            </Tab>
            <Tab>
              <Jp text="ティックチャート" />
            </Tab>
          </TabStrip>
        </WatchArea>
        <Spacer $h={4} />
        <NavHeader>
          <span>
            <Jp text="ナビゲーター" />
          </span>
          <span>×</span>
        </NavHeader>
        <TreePanel>
          <TreeRow $indent={2}>
            <Glyph name="mtwindow" size={10} />
            <TreeLabel>MetaTrader4</TreeLabel>
          </TreeRow>
          <TreeRow $indent={15}>
            <Glyph name="account" size={11} />
            <TreeLabel>口座</TreeLabel>
          </TreeRow>
          <TreeRow $indent={29}>
            <Glyph name="server" size={10} />
            <TreeLabel>TTCM-Live</TreeLabel>
          </TreeRow>
          <TreeRow $indent={41}>
            <Glyph name="usergold" size={9} />
            <RedactedRow />
          </TreeRow>
          <TreeRow $indent={15}>
            <Glyph name="indicator" size={11} />
            <TreeLabel>
              <Jp text="インディケータ" />
            </TreeLabel>
          </TreeRow>
          <TreeRow $indent={15}>
            <Glyph name="expert" size={11} />
            <TreeLabel>
              <Jp text="エキスパートアドバイザ" />
            </TreeLabel>
          </TreeRow>
          <TreeRow $indent={28}>
            <Glyph name="expert" size={11} />
            <TreeLabel $marked>EAM2020</TreeLabel>
          </TreeRow>
          <TreeRow $indent={28}>
            <Glyph name="expert" size={11} />
            <TreeLabel>MACD Sample</TreeLabel>
          </TreeRow>
          <TreeRow $indent={28}>
            <Glyph name="expert" size={11} />
            <TreeLabel>Moving Average</TreeLabel>
          </TreeRow>
          <TreeRow $indent={15}>
            <Glyph name="script" size={11} />
            <TreeLabel>
              <Jp text="スクリプト" />
            </TreeLabel>
          </TreeRow>
          <TreeGuides viewBox="0 0 60 120">
            <path d="M11 11V108M11 17H17M11 51H17M11 62H17M11 107H17M24 23V40M24 28H31M37 34V40H43M24 62V96M24 73H31M24 85H31M24 96H31" stroke="#d2d8de" fill="none" />
            {[17, 51, 62, 107].map((y) => (
              <g key={y}>
                <rect x="8.5" y={y - 2.5} width="5" height="5" fill="#eef2f6" stroke="#a6b2be" strokeWidth=".7" />
                <path d={`M9.5 ${y}h3${y === 51 || y === 107 ? `M11 ${y - 1.5}v3` : ""}`} stroke="#555" strokeWidth=".7" />
              </g>
            ))}
            <rect x="21.5" y="25.5" width="5" height="5" fill="#eef2f6" stroke="#a6b2be" strokeWidth=".7" />
            <path d="M22.5 28h3" stroke="#555" strokeWidth=".7" />
          </TreeGuides>
        </TreePanel>
        <TabStrip $height={15}>
          <Tab $active>全般</Tab>
          <Tab>
            <Jp text="お気に入り" />
          </Tab>
        </TabStrip>
        <Spacer $h={3} />
      </LeftDock>

      <ChartDock>
        <WindowGrid>
          <WindowFrame active>
            <Chart spec={eurSpec} />
          </WindowFrame>
          <WindowFrame title="GBPUSD,H4" edge>
            <Chart spec={gbpSpec} />
            <Trade top={12} prefix="1.29" sell={["49", "6"]} buy={["51", "3"]} />
          </WindowFrame>
          <WindowFrame title="USDCHF,H4">
            <Chart spec={chfSpec} />
            <Trade top={12} prefix="0.98" sell={["70", "6"]} buy={["72", "5"]} />
          </WindowFrame>
          <WindowFrame title="USDJPY,H4" edge>
            <Chart spec={jpySpec} />
            <Trade top={12} red prefix="108" sell={["26", "8"]} buy={["28", "3"]} />
          </WindowFrame>
        </WindowGrid>
        <ChartTabs>
          <Tab $active $size={6.9}>EURUSD,H4</Tab>
          <Tab $size={6.9}>USDCHF,H4</Tab>
          <Tab $size={6.9}>GBPUSD,H4</Tab>
          <Tab $size={6.9}>USDJPY,H4</Tab>
          <Chevrons>
            <span>‹</span>
            <span>›</span>
          </Chevrons>
        </ChartTabs>
      </ChartDock>
    </Workspace>

    <Terminal>
      <TerminalSide>
        <SideClose>×</SideClose>
        <SideTitle>ターミナル</SideTitle>
      </TerminalSide>
      <TerminalMain>
        <TableArea>
          <TableBody>
            <HeaderRow>
              <HeadCell $left>
                <span>注文番号</span>
                <span>/</span>
              </HeadCell>
              {headers.map((h, i) => (
                <HeadCell key={h + i}>
                  <span>
                    <Jp text={h} />
                  </span>
                </HeadCell>
              ))}
              <HeadCell $tail>損益</HeadCell>
            </HeaderRow>
            {orders.map((row, i) => (
              <DataRow key={row[0]} $alt={i % 2 === 1}>
                {row.map((value, c) => (
                  <DataCell key={c} $first={c === 0}>
                    {c === 0 && <Glyph name={row[2] === "sell" ? "sellticket" : "buyticket"} size={10} />}
                    {value}
                    {c === 11 && <RowClose>×</RowClose>}
                  </DataCell>
                ))}
              </DataRow>
            ))}
          </TableBody>
          <Scrollbar>
            <ScrollButton>
              <svg width="8" height="6" viewBox="0 0 8 6">
                <path d="M1 5l3-3 3 3" fill="none" stroke="#444" strokeWidth="1.2" />
              </svg>
            </ScrollButton>
            <ScrollThumb />
            <ScrollTrack />
            <ScrollButton>
              <svg width="8" height="6" viewBox="0 0 8 6">
                <path d="M1 1l3 3 3-3" fill="none" stroke="#444" strokeWidth="1.2" />
              </svg>
            </ScrollButton>
          </Scrollbar>
        </TableArea>
        <TerminalTabs>
          <Tab $active>取引</Tab>
          {terminalTabs.map((t) => (
            <Tab key={t}>
              <Jp text={t} />
            </Tab>
          ))}
          <Tab>
            <Jp text="メールボックス" />
            <Badge>7</Badge>
          </Tab>
          {terminalTabsRest.map((t) => (
            <Tab key={t}>
              <Jp text={t} />
            </Tab>
          ))}
        </TerminalTabs>
      </TerminalMain>
    </Terminal>

    <StatusBar>
      <StatusCell $w={768} />
      <StatusCell $w={72}>Default</StatusCell>
      <StatusCell $w={64} />
      <StatusCell $w={44} />
      <StatusCell $w={44} />
      <StatusCell $w={43} />
      <StatusCell $w={43} />
      <StatusCell $w={44} />
      <StatusCell $w={78} $plain>
        <svg width="15" height="9" viewBox="0 0 15 9">
          {Array.from({ length: 7 }, (_, i) => (
            <g key={i}>
              <rect x={i * 2.1} y="0" width="1.6" height="5" fill="#7fa050" />
              <rect x={i * 2.1} y="5" width="1.6" height="4" fill="#c65a4a" />
            </g>
          ))}
        </svg>
        149/0 kb
      </StatusCell>
    </StatusBar>

    <Taskbar>
      <TaskSlot>
        <svg width="12" height="12" viewBox="0 0 12 12">
          <path d="M0 1.6l5-.7v4.7H0zM5.8.8L12 0v5.6H5.8zM0 6.4h5v4.7l-5-.7zM5.8 6.4H12V12l-6.2-.8z" fill="#f2f2f2" />
        </svg>
      </TaskSlot>
      <TaskSlot>
        <svg width="12" height="12" viewBox="0 0 12 12">
          <circle cx="7.3" cy="4.7" r="3.6" fill="none" stroke="#e8e8e8" />
          <path d="M4.7 7.3L1 11" stroke="#e8e8e8" strokeWidth="1.2" />
        </svg>
      </TaskSlot>
      <TaskSlot>
        <svg width="12" height="10" viewBox="0 0 12 10">
          <path d="M0 .5h7M0 9.5h7M9 .5h3M9 9.5h3M11.5 2v6" stroke="#e0e0e0" fill="none" />
          <rect x="1" y="2.5" width="5" height="5" fill="none" stroke="#e0e0e0" />
        </svg>
      </TaskSlot>
      <TaskSlot $w={34}>
        <svg width="15" height="15" viewBox="0 0 16 16">
          <path d="M2.4 9.2h10.3c.6-3.6-1.6-6.2-4.7-6.2-3 0-5.4 2.6-5.6 6.2zm3-2.2c.4-1.4 1.4-2.2 2.7-2.2s2.2.8 2.4 2.2z" fill="#2aa4e8" fillRule="evenodd" />
          <path d="M2.4 9c-.2 3.4 2 5.6 5.2 5.6 2.2 0 3.9-1 4.8-3h-2.8c-.5.7-1.2 1-2 1-1.4 0-2.4-1-2.4-3.6z" fill="#2aa4e8" />
          <path d="M1 14c2-5 7-10 13-12.5" stroke="#f2b833" strokeWidth="1" fill="none" />
        </svg>
      </TaskSlot>
      <TaskSlot $w={29}>
        <svg width="14" height="13" viewBox="0 0 14 13">
          <path d="M0 1h5l1 1h8v10H0z" fill="#f1c644" />
          <rect x="1" y="7" width="12" height="5" fill="#f8dc7e" />
          <rect x="4" y="8.5" width="6" height="3.5" fill="#3aa0d8" />
        </svg>
      </TaskSlot>
      <TaskSlot $active>
        <Ring size={16} />
      </TaskSlot>
      <Tray>
        <TrayItem $w={16}>
          <svg width="11" height="9" viewBox="0 0 11 9">
            <rect x=".5" y=".5" width="7" height="5.5" fill="none" stroke="#ddd" />
            <rect x="5" y="2.5" width="5.5" height="4" fill="#0b0d12" stroke="#ddd" />
            <path d="M2 8.5h5" stroke="#ddd" />
          </svg>
        </TrayItem>
        <TrayItem $w={14}>
          <svg width="11" height="9" viewBox="0 0 11 9">
            <path d="M0 3h2l2.5-2.5v8L2 6H0z" fill="none" stroke="#ddd" />
            <rect x="6" y="3.5" width="5" height="5" fill="#d82020" />
            <path d="M7 4.5l3 3M10 4.5l-3 3" stroke="#fff" strokeWidth=".7" />
          </svg>
        </TrayItem>
        <TrayItem $w={16}>A</TrayItem>
        <TrayItem $w={20}>
          <svg width="10" height="10" viewBox="0 0 10 10">
            <rect x=".5" y=".5" width="9" height="9" fill="none" stroke="#ccc" />
            <circle cx="5" cy="5" r="3" fill="#ccc" />
            <path d="M5 2v6l3-3z" fill="#222" />
          </svg>
        </TrayItem>
        <Clock>
          19:47
          <br />
          2019/10/31
        </Clock>
        <TrayItem $w={30}>
          <svg width="12" height="11" viewBox="0 0 12 11">
            <path d="M1 .5h10v7H6.5L4 10V7.5H1z" fill="none" stroke="#ddd" />
          </svg>
        </TrayItem>
      </Tray>
    </Taskbar>

    <MenuPanel $left={0} $top={26} $width={166}>
      <MenuList entries={fileMenu} />
    </MenuPanel>
    <MenuPanel $left={164} $top={68} $width={138}>
      <MenuList entries={profileMenu} />
    </MenuPanel>
  </Page>
);

export default App;
